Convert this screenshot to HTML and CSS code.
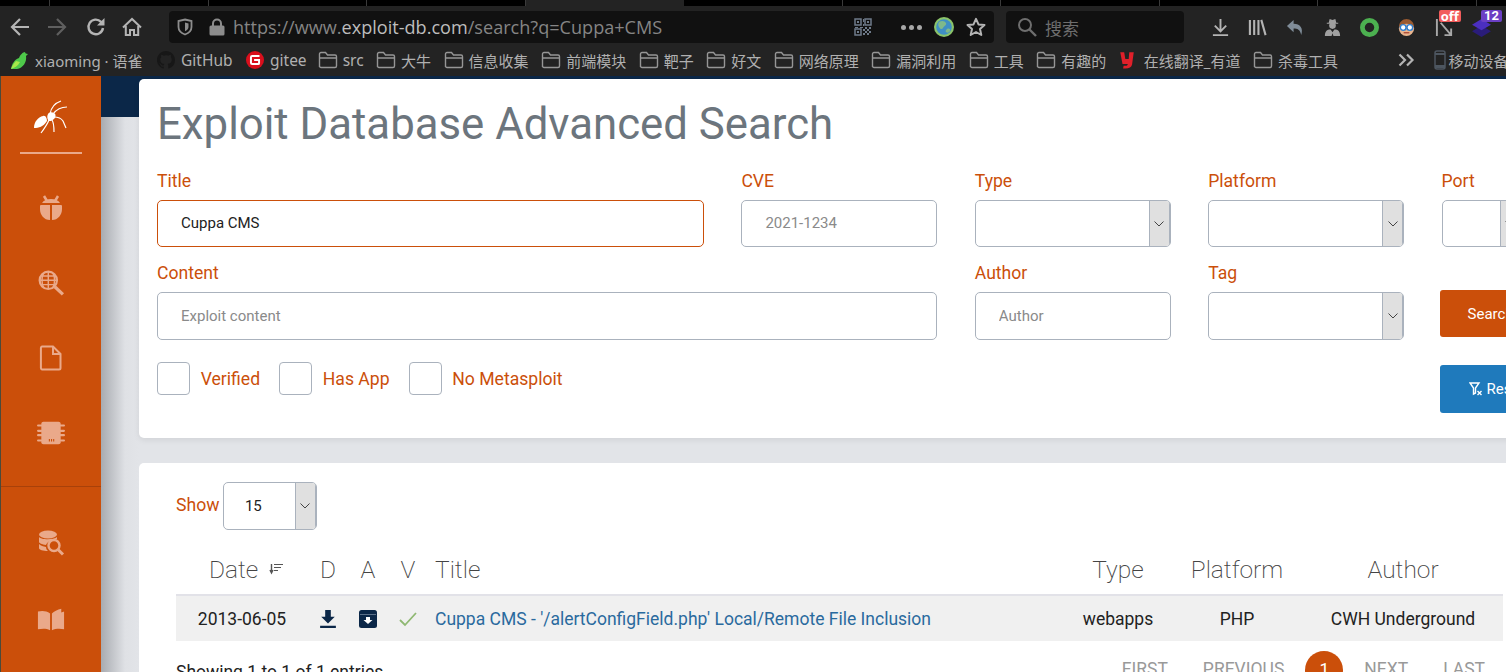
FILE: index.html
```html
<!DOCTYPE html>
<html lang="en">
<head>
    <meta charset="UTF-8">
    <meta name="viewport" content="width=device-width, initial-scale=1.0">
    <title>Exploit Database Advanced Search</title>
    <link rel="stylesheet" href="styles.css">
</head>
<body>
    <svg class="sprites" width="0" height="0">
        <symbol id="folder" viewBox="0 0 20 18"><path d="M1.500 16V3a1.500 1.500 0 0 1 1.500-1.500h4.500L9.500 4H17a1.500 1.500 0 0 1 1.500 1.500V15a1.500 1.500 0 0 1-1.500 1.500H3A1.500 1.500 0 0 1 1.500 15zM1.500 7h17" fill="none" stroke="#969696" stroke-width="1.400"/></symbol>
        <symbol id="chevron" viewBox="0 0 12 8"><path d="M1.500 1.500 6 6l4.500-4.500" fill="none" stroke="#444" stroke-width="1"/></symbol>
    </svg>

    <div class="tabstrip">
        <span class="tab-start"></span>
        <span class="tab"></span><span class="tab"></span><span class="tab"></span>
        <span class="tab active"></span>
        <span class="tab"></span><span class="tab"></span><span class="tab"></span><span class="tab"></span><span class="tab"></span>
    </div>

    <div class="toolbar">
        <svg class="nav-icon" viewBox="0 0 20 20"><path d="M19 10H2M10 2l-8 8 8 8" fill="none" stroke="#b4b4b4" stroke-width="2.200"/></svg>
        <svg class="nav-icon forward" viewBox="0 0 20 20"><path d="M1 10h17M10 2l8 8-8 8" fill="none" stroke="#5f5f5f" stroke-width="2.200"/></svg>
        <svg class="nav-icon reload" viewBox="0 0 20 20"><path d="M17 11a7.300 7.300 0 1 1-2-6.200L17 7" fill="none" stroke="#b4b4b4" stroke-width="2.400"/><path d="M18.500 1v7.500H11z" fill="#b4b4b4"/></svg>
        <svg class="nav-icon home" viewBox="0 0 20 20"><path d="M1 10.500 10 2l9 8.500M3.800 9v9h4.200v-5h4v5h4.200V9" fill="none" stroke="#b4b4b4" stroke-width="2"/></svg>

        <div class="urlbar">
            <svg class="shield" viewBox="0 0 16 18"><path d="M8 1.500 14.500 3v6c0 3.500-2.500 6-6.500 7.500C4 15 1.500 12.500 1.500 9V3z" fill="none" stroke="#8c8c8c" stroke-width="1.800"/><path d="M8 4.500 11.500 5.500v3.500c0 2-1.500 3.300-3.500 4.200z" fill="#8c8c8c"/></svg>
            <svg class="lock" viewBox="0 0 16 18"><path d="M4 8V5.500a4 4 0 0 1 8 0V8" fill="none" stroke="#8c8c8c" stroke-width="2"/><rect x="0.500" y="7.500" width="15" height="10" rx="1.500" fill="#8c8c8c"/></svg>
            <span class="url">https://www.<b>exploit-db.com</b>/search?q=Cuppa+CMS</span>
            <svg class="qr" viewBox="0 0 18 18"><path d="M1 1h6v6H1zM11 1h6v6h-6zM1 11h6v6H1z" fill="none" stroke="#6f7b8a" stroke-width="1.500"/><path d="M3 3h2v2H3zM13 3h2v2h-2zM3 13h2v2H3zM9 1h1v3H9zM9 6h1v2H9zM1 9h3v1H1zM6 9h3v1H6zM11 9h2v2h-2zM15 9h2v2h-2zM9 11h2v2H9zM13 11h2v2h-2zM11 13h2v2h-2zM15 13h2v2h-2zM9 15h2v2H9zM13 15h2v2h-2z" fill="#6f7b8a"/></svg>
            <span class="dots"><i></i><i></i><i></i></span>
            <svg class="globe" viewBox="0 0 20 20"><circle cx="10" cy="10" r="10" fill="#8bc46a"/><circle cx="10" cy="10" r="7.800" fill="#3f8fc4"/><path d="M5 5c3-2 6-1 7 1s-2 3-3 5-3 1-4-1-1-3 0-5zM13 12c2-1 4 0 3 2s-3 2-4 1 0-2 1-3z" fill="#7fb98a"/></svg>
            <svg class="star" viewBox="0 0 20 20"><path d="M10 1.800 12.500 7.400l6 .6-4.500 4 1.300 6L10 15l-5.300 3 1.300-6L1.500 8l6-.6z" fill="none" stroke="#b4b4b4" stroke-width="2" stroke-linejoin="round"/></svg>
        </div>

        <div class="searchbar">
            <svg class="search-glass" viewBox="0 0 20 20"><circle cx="8" cy="8" r="6" fill="none" stroke="#6e6e6e" stroke-width="2"/><path d="m12.500 12.500 6.500 6.500" stroke="#6e6e6e" stroke-width="2.400"/></svg>
            <span>搜索</span>
        </div>

        <div class="addons">
            <svg class="addon" viewBox="0 0 20 20"><path d="M10 1v12M4 8l6 6 6-6M2 18h16" fill="none" stroke="#b4b4b4" stroke-width="2"/></svg>
            <svg class="addon" viewBox="0 0 20 20"><path d="M2 2v16M6.500 2v16M11 2v16M14 2l4.500 16" fill="none" stroke="#b4b4b4" stroke-width="2.200"/></svg>
            <svg class="addon" viewBox="0 0 20 20"><path d="M8 2 1 8.500 8 15v-4c4 0 7 1 8 7 2.500-7-1-12-8-12z" fill="#7f8c98"/></svg>
            <svg class="addon" viewBox="0 0 20 20"><path d="M7 1l3 1 3-1 1 4h2v1H4V5h2z" fill="#a0a0a0"/><circle cx="10" cy="8" r="3.500" fill="#a0a0a0"/><path d="M2 19c0-5 2-7 6-7l2 3 2-3c4 0 6 2 6 7h-7l-1-3-1 3z" fill="#a0a0a0"/></svg>
            <svg class="addon" viewBox="0 0 20 20"><circle cx="10" cy="10" r="7.500" fill="none" stroke="#4cb050" stroke-width="5"/></svg>
            <svg class="addon" viewBox="0 0 20 20"><circle cx="10" cy="11" r="8" fill="#e8b48e"/><path d="M2 10c0-6 4-9 8-9s8 3 8 9c-2-3-4-4-8-4s-6 1-8 4z" fill="#9a5a30"/><circle cx="6.500" cy="10" r="3" fill="#fff" stroke="#2f7fd0" stroke-width="1.500"/><circle cx="13.500" cy="10" r="3" fill="#fff" stroke="#2f7fd0" stroke-width="1.500"/><path d="M7 15.500h6" stroke="#b0503a" stroke-width="1.500"/></svg>
            <span class="badged">
                <svg class="addon" viewBox="0 0 20 20"><path d="M2 1v18M6 5l11 13M17 11v7h-7" fill="none" stroke="#a8a8a8" stroke-width="2"/></svg>
                <span class="badge off">off</span>
            </span>
            <span class="badged">
                <svg class="addon" viewBox="0 0 20 20"><path d="M10 8l10 6-10 6-10-6z" fill="#2a1c7a"/><path d="M10 1l10 6-10 6L0 7z" fill="#4b2fc0"/></svg>
                <span class="badge count">12</span>
            </span>
        </div>
    </div>

    <div class="bookmarks">
        <span class="mark first">
            <svg class="mark-icon yuque" viewBox="0 0 20 20"><path d="M1 19c1-5 3-9 8-11 1-3 4-6 6-6 0 1 1 2 3 2l-2 2c1 6-3 12-9 13z" fill="#4ec94a"/><path d="M1 19c3-1 7-3 9-7l-4-1c-2 2-4 5-5 8z" fill="#a8e84a"/></svg>
            xiaoming · 语雀
        </span>
        <span class="mark latin">
            <svg class="mark-icon gh" viewBox="0 0 16 16"><path fill="#171717" d="M8 0C3.580 0 0 3.580 0 8c0 3.540 2.290 6.530 5.470 7.590.4.070.55-.17.55-.38v-1.340c-2.230.48-2.700-1.070-2.700-1.070-.36-.93-.89-1.170-.89-1.170-.73-.5.050-.49.050-.49.800.060 1.230.830 1.230.830.710 1.220 1.870.870 2.330.660.070-.520.280-.870.510-1.070-1.780-.2-3.640-.890-3.640-3.950 0-.870.310-1.590.820-2.150-.08-.2-.36-1.020.08-2.120 0 0 .67-.210 2.200.820A7.650 7.650 0 0 1 8 3.870c.68 0 1.360.09 2 .27 1.530-1.040 2.200-.82 2.200-.82.440 1.100.16 1.920.080 2.120.510.560.820 1.270.820 2.150 0 3.070-1.870 3.750-3.650 3.950.290.250.540.730.540 1.480v2.190c0 .210.150.460.550.380A8.010 8.010 0 0 0 16 8c0-4.420-3.580-8-8-8z"/></svg>
            GitHub
        </span>
        <span class="mark latin tight">
            <svg class="mark-icon" viewBox="0 0 20 20"><circle cx="10" cy="10" r="10" fill="#d90f1c"/><path d="M15 5.500H7a1.500 1.500 0 0 0-1.500 1.500v6A1.500 1.500 0 0 0 7 14.500h6.500a1 1 0 0 0 1-1V10H9" fill="none" stroke="#fff" stroke-width="2.200"/></svg>
            gitee
        </span>
        <span class="mark latin"><svg class="mark-icon"><use href="#folder"/></svg>src</span>
        <span class="mark"><svg class="mark-icon"><use href="#folder"/></svg>大牛</span>
        <span class="mark"><svg class="mark-icon"><use href="#folder"/></svg>信息收集</span>
        <span class="mark"><svg class="mark-icon"><use href="#folder"/></svg>前端模块</span>
        <span class="mark"><svg class="mark-icon"><use href="#folder"/></svg>靶子</span>
        <span class="mark"><svg class="mark-icon"><use href="#folder"/></svg>好文</span>
        <span class="mark"><svg class="mark-icon"><use href="#folder"/></svg>网络原理</span>
        <span class="mark"><svg class="mark-icon"><use href="#folder"/></svg>漏洞利用</span>
        <span class="mark"><svg class="mark-icon"><use href="#folder"/></svg>工具</span>
        <span class="mark"><svg class="mark-icon"><use href="#folder"/></svg>有趣的</span>
        <span class="mark">
            <svg class="mark-icon youdao" viewBox="0 0 14 16"><path d="M1 1h3.500l1 6h3l.5-6h4L11.500 12C11 15 8 16 3.500 15.500l.5-2.500c2.500.3 3.500 0 3.700-1.500H3z" fill="#e0202a"/></svg>
            在线翻译_有道
        </span>
        <span class="mark"><svg class="mark-icon"><use href="#folder"/></svg>杀毒工具</span>
        <svg class="more" viewBox="0 0 17 14"><path d="M1.500 1.500 7 7l-5.500 5.500M9 1.500 14.500 7 9 12.500" fill="none" stroke="#b4b4b4" stroke-width="2.200"/></svg>
        <svg class="phone" viewBox="0 0 12 20"><rect x="1" y="1" width="10" height="18" rx="2" fill="none" stroke="#4d5660" stroke-width="1.500"/><path d="M1 3h10v2H1zM1 15h10v3H1z" fill="#4d5660"/></svg>
        <span class="mark-text">移动设备</span>
    </div>

    <div class="page">
        <nav class="sidebar">
            <div class="brand">
                <svg class="spider" viewBox="0 0 36 34">
                    <path d="M1 28C1 22 5 17 10 16c3-1 4 3 4 5-4 6-8 7-13 7z" fill="#fff"/>
                    <path d="M15 14c1-2 4-2 6-1s2 4 0 6-5 3-6 1-1-4 0-6z" fill="#fff"/>
                    <path d="M17 14C18 8 22 3 28 1M20 14C23 10 28 7 34 7M21 17c4 0 7 1 9 4l3 7M19 20c2 3 2 7 2 12M16 20c-2 5-5 9-8 13" fill="none" stroke="#fff" stroke-width="1.200"/>
                </svg>
            </div>
            <div class="side-items">
                <svg class="side-icon" viewBox="0 0 24 26"><path d="M5 1l3 5M19 1l-3 5" stroke="#eaa98a" stroke-width="2.500"/><path d="M3 8c2-3 5-4 9-4s7 1 9 4z" fill="#eaa98a"/><path d="M1 11a1 1 0 0 1 1-1h9v15C5 25 1 20 1 14zM23 11a1 1 0 0 0-1-1h-9v15c6 0 10-5 10-11z" fill="#eaa98a"/></svg>
                <svg class="side-icon" viewBox="0 0 24 24"><circle cx="9.500" cy="9.500" r="8" fill="none" stroke="#eaa98a" stroke-width="2"/><path d="M2 9.500h15M9.500 1.500v16M5 3c-2 5-2 8 0 13M14 3c2 5 2 8 0 13M3 5.500h13M3 13.500h13" fill="none" stroke="#eaa98a" stroke-width="1.300"/><path d="m15.500 15.500 7.500 7" stroke="#eaa98a" stroke-width="3"/></svg>
                <svg class="side-icon" viewBox="0 0 22 26"><path d="M2 1.500h11l7.500 7.500v14a1.500 1.500 0 0 1-1.500 1.500H2A1.500 1.500 0 0 1 .9 23V3A1.500 1.500 0 0 1 2 1.500z" fill="none" stroke="#eaa98a" stroke-width="2"/><path d="M13 1.500V9h7.500" fill="none" stroke="#eaa98a" stroke-width="2"/></svg>
                <svg class="side-icon" viewBox="0 0 26 22"><rect x="4" y="0.500" width="18" height="21" rx="2" fill="#eaa98a"/><path d="M1 4h3M1 9h3M1 13h3M1 18h3M22 4h3M22 9h3M22 13h3M22 18h3" stroke="#eaa98a" stroke-width="2" stroke-linecap="round"/><path d="M11.500 16.500v2.500M13.500 16.500v2.500M15.500 16.500v2.500" stroke="#cb4f0a" stroke-width="1"/></svg>
            </div>
            <div class="side-items lower">
                <svg class="side-icon" viewBox="0 0 26 26"><ellipse cx="10" cy="4.500" rx="9" ry="4" fill="#eaa98a"/><path d="M1 7c2 3 15 3 18 0v2c-6 1-10 3-11 6-4-.5-7-2-7-3zM1 14c2 2 4 2.500 7 3 0 2 1 3 2 4-5 0-9-1-9-3z" fill="#eaa98a"/><circle cx="16" cy="15.500" r="5.500" fill="none" stroke="#eaa98a" stroke-width="2.400"/><path d="m20 19.500 5 5" stroke="#eaa98a" stroke-width="3"/></svg>
                <svg class="side-icon" viewBox="0 0 30 26"><path d="M14 6C10 3 5 3 1 4v19c5-1 9-1 13 1zM16 6c2-2 6-4 10-5v4l3-1v19c-4-1-9-1-13 1z" fill="#eaa98a"/></svg>
            </div>
        </nav>

        <main class="content">
            <section class="card search-card">
                <h1>Exploit Database Advanced Search</h1>
                <form class="search-form">
                    <div class="field f-title">
                        <label>Title</label>
                        <input class="text-input focused" type="text" value="Cuppa CMS">
                    </div>
                    <div class="field">
                        <label>CVE</label>
                        <input class="text-input" type="text" placeholder="2021-1234">
                    </div>
                    <div class="field">
                        <label>Type</label>
                        <div class="select"><span class="select-value"></span><span class="select-arrow"><svg class="chevron"><use href="#chevron"/></svg></span></div>
                    </div>
                    <div class="field">
                        <label>Platform</label>
                        <div class="select"><span class="select-value"></span><span class="select-arrow"><svg class="chevron"><use href="#chevron"/></svg></span></div>
                    </div>
                    <div class="field">
                        <label>Port</label>
                        <div class="select port"><span class="select-value"></span><span class="select-arrow"><svg class="chevron"><use href="#chevron"/></svg></span></div>
                    </div>

                    <div class="field f-content">
                        <label>Content</label>
                        <input class="text-input tall" type="text" placeholder="Exploit content">
                    </div>
                    <div class="field">
                        <label>Author</label>
                        <input class="text-input tall" type="text" placeholder="Author">
                    </div>
                    <div class="field">
                        <label>Tag</label>
                        <div class="select tall"><span class="select-value"></span><span class="select-arrow"><svg class="chevron"><use href="#chevron"/></svg></span></div>
                    </div>
                    <div class="f-submit">
                        <button class="btn btn-search" type="button">Search</button>
                    </div>

                    <div class="checks">
                        <span class="check"><span class="box"></span>Verified</span>
                        <span class="check"><span class="box"></span>Has App</span>
                        <span class="check"><span class="box"></span>No Metasploit</span>
                    </div>
                    <div class="f-reset">
                        <button class="btn btn-reset" type="button">
                            <svg class="funnel" viewBox="0 0 14 14"><path d="M1 1h9L6.500 6v5L4.500 12V6z" fill="none" stroke="#fff" stroke-width="1.400"/><path d="m8.500 9 4 4M12.500 9l-4 4" stroke="#fff" stroke-width="1.400"/></svg>
                            Reset
                        </button>
                    </div>
                </form>
            </section>

            <section class="card results-card">
                <div class="length">
                    <span>Show</span>
                    <div class="select length-select"><span class="select-value">15</span><span class="select-arrow"><svg class="chevron"><use href="#chevron"/></svg></span></div>
                </div>
                <table class="results">
                    <thead>
                        <tr>
                            <th class="c-date">Date <svg class="sort" viewBox="0 0 14 12"><path d="M2.500 1v8M1 7l1.500 3L4 7" fill="none" stroke="#555" stroke-width="1.400"/><path d="M5 1.500h9M5 4.500h7M5 7.500h4" stroke="#555" stroke-width="1.200"/></svg></th>
                            <th class="c-icon">D</th>
                            <th class="c-icon">A</th>
                            <th class="c-icon">V</th>
                            <th class="c-title">Title</th>
                            <th class="c-type">Type</th>
                            <th class="c-platform">Platform</th>
                            <th class="c-author">Author</th>
                        </tr>
                    </thead>
                    <tbody>
                        <tr>
                            <td>2013-06-05</td>
                            <td><svg class="row-icon" viewBox="0 0 14 16"><path d="M4.500 0h5v6H13L7 12 1 6h3.500zM0 14h14v2H0z" fill="#0b2748"/></svg></td>
                            <td><svg class="row-icon" viewBox="0 0 18 18"><rect y="0" width="18" height="18" rx="2.500" fill="#0b2748"/><path d="M1 4.500h16" stroke="#5a6f88" stroke-width="1"/><path d="M7 7h4v3h2.500L9 14 4.500 10H7z" fill="#fff"/></svg></td>
                            <td><svg class="row-icon" viewBox="0 0 18 14"><path d="M1 8l5 5L17 1" fill="none" stroke="#8fb872" stroke-width="1.800"/></svg></td>
                            <td class="c-title"><a href="#">Cuppa CMS - '/alertConfigField.php' Local/Remote File Inclusion</a></td>
                            <td>webapps</td>
                            <td>PHP</td>
                            <td>CWH Underground</td>
                        </tr>
                    </tbody>
                </table>
                <div class="table-foot">
                    <span class="info">Showing 1 to 1 of 1 entries</span>
                    <div class="pager">
                        <span class="pg wide-right">FIRST</span>
                        <span class="pg">PREVIOUS</span>
                        <span class="pg-current">1</span>
                        <span class="pg wide-right">NEXT</span>
                        <span class="pg">LAST</span>
                    </div>
                </div>
            </section>
        </main>
    </div>
</body>
</html>
```

FILE: styles.css
```css
html, body {
    margin: 0;
    padding: 0;
    height: 672px;
    overflow: hidden;
}
body {
    font-family: Roboto, "Noto Sans CJK SC", sans-serif;
    background-color: #e2e4e8;
}
.sprites {
    display: block;
    height: 0;
}

/* browser chrome */
.tabstrip {
    display: flex;
    height: 6px;
    background-color: #000;
}
.tab-start {
    flex: 0 0 50px;
    border-right: 1px solid #3a3a3a;
    box-sizing: border-box;
}
.tab {
    flex: 0 0 158.5px;
    box-sizing: border-box;
    border-right: 1px solid #3a3a3a;
}
.tab.active {
    background-color: #232323;
    border-right: 0;
}
.toolbar {
    display: flex;
    align-items: center;
    height: 42px;
    padding-left: 10px;
    background-color: #232323;
    color: #b4b4b4;
}
.nav-icon {
    flex: none;
    width: 20px;
    height: 20px;
    margin-right: 17px;
}
.nav-icon.forward {
    margin-right: 19px;
}
.nav-icon.reload {
    margin-right: 16px;
}
.nav-icon.home {
    margin-right: 27px;
}
.urlbar {
    display: flex;
    align-items: center;
    flex: none;
    width: 825px;
    height: 32px;
    box-sizing: border-box;
    padding-left: 8px;
    background-color: #111;
    border-radius: 4px;
    font-family: "Open Sans", sans-serif;
    font-size: 18.1px;
}
.shield {
    width: 16px;
    height: 18px;
    margin-right: 16px;
}
.lock {
    width: 16px;
    height: 18px;
    margin-right: 8px;
}
.url {
    width: 621px;
    color: #858585;
    white-space: nowrap;
}
.url b {
    font-weight: 400;
    color: #bdbdbd;
}
.qr {
    width: 18px;
    height: 18px;
    margin-right: 29px;
}
.dots {
    display: flex;
    gap: 3px;
    width: 33px;
}
.dots i {
    width: 5px;
    height: 5px;
    border-radius: 50%;
    background-color: #a8a8a8;
}
.globe {
    width: 20px;
    height: 20px;
    margin-right: 12px;
}
.star {
    width: 20px;
    height: 20px;
}
.searchbar {
    display: flex;
    align-items: center;
    flex: none;
    width: 178px;
    height: 32px;
    box-sizing: border-box;
    margin-left: 12px;
    padding-left: 11px;
    background-color: #111;
    border-radius: 4px;
    color: #6e6e6e;
    font-size: 17px;
}
.search-glass {
    width: 20px;
    height: 20px;
    margin-right: 8px;
}
.addons {
    display: flex;
    align-items: center;
    gap: 18.3px;
    margin-left: 27px;
}
.addon {
    display: block;
    width: 19px;
    height: 19px;
}
.badged {
    position: relative;
    display: block;
}
.badge {
    position: absolute;
    top: -8px;
    height: 12px;
    font-family: "Open Sans", sans-serif;
    font-size: 13px;
    font-weight: 700;
    line-height: 12px;
    color: #fff;
    border-radius: 2px;
    padding: 0 2px;
    white-space: nowrap;
}
.badge.off {
    left: 4px;
    background-color: #f25c5c;
}
.badge.count {
    left: 9px;
    background-color: #6b3fc4;
    font-family: Roboto, sans-serif;
    padding: 0 3px;
}
.bookmarks {
    display: flex;
    align-items: center;
    gap: 12.5px;
    height: 28px;
    padding: 0 0 4px 10px;
    box-sizing: border-box;
    background-color: #232323;
    font-family: "Noto Sans", "Noto Sans CJK SC", sans-serif;
    font-size: 15px;
    color: #b0b0b0;
    white-space: nowrap;
}
.mark {
    display: flex;
    align-items: center;
    gap: 5px;
}
.mark.latin {
    font-size: 15.5px;
}
.mark.first {
    margin-right: 2px;
}
.mark.tight {
    margin-right: -1.5px;
}
.mark-icon {
    flex: none;
    width: 20px;
    height: 18px;
}
.mark-icon.yuque {
    height: 20px;
}
.mark-icon.gh {
    width: 18px;
    margin-right: 1px;
}
.mark-icon.youdao {
    width: 16px;
    margin-right: 4px;
}
.more {
    flex: none;
    width: 17px;
    height: 14px;
    margin-left: 48px;
}
.phone {
    flex: none;
    width: 12px;
    height: 20px;
    margin-left: 6px;
}
.mark-text {
    margin-left: -10px;
}

/* page */
.page {
    display: flex;
    height: 596px;
}
.sidebar {
    flex: 0 0 100px;
    border-left: 1px solid #4a4a3a;
    background-color: #cb4f0a;
}
.brand {
    display: flex;
    justify-content: center;
    align-items: flex-start;
    box-sizing: border-box;
    height: 78px;
    margin: 0 19px;
    padding-top: 24px;
    border-bottom: 2px solid #eaa98a;
}
.spider {
    width: 36px;
    height: 34px;
}
.side-items {
    display: flex;
    flex-direction: column;
    align-items: center;
    height: 333px;
    padding-top: 41px;
    box-sizing: border-box;
    gap: 49px;
    border-bottom: 1px solid #a8410a;
}
.side-items.lower {
    border-bottom: 0;
    height: auto;
    padding-top: 43px;
    gap: 51px;
}
.side-icon {
    width: 28px;
    height: 26px;
}
.content {
    flex: 1;
    min-width: 0;
    padding: 3px 0 0 38px;
    overflow: hidden;
    background:
        linear-gradient(#0b2748, #0b2748) 0 0 / 100% 41px no-repeat,
        linear-gradient(90deg, #a8abb0, #dfe1e5 24px, #e2e4e8 38px);
}
.card {
    width: 1500px;
    background-color: #fff;
    border-radius: 5px;
}
.search-card {
    height: 359px;
    box-sizing: border-box;
    padding: 14px 0 0 18px;
    box-shadow: 0 2px 6px rgba(0, 0, 0, 0.08);
}
h1 {
    margin: 0;
    font-size: 43.75px;
    font-weight: 400;
    line-height: 62px;
    color: #6c757d;
}
.search-form {
    display: grid;
    grid-template-columns: 547px 196px 196px 196px 196px;
    grid-template-rows: 92px 92px auto;
    column-gap: 37.4px;
    margin-top: 14px;
}
.field {
    display: flex;
    flex-direction: column;
}
.f-content {
    grid-column: 1 / span 2;
}
.f-submit {
    margin: 29px 0 0 -2px;
}
label {
    font-size: 17.6px;
    line-height: 24px;
    margin-bottom: 7px;
    color: #cb4f0a;
}
.text-input {
    box-sizing: border-box;
    width: 100%;
    height: 47px;
    padding: 0 23px 2px;
    border: 1px solid #aab2bd;
    border-radius: 5px;
    font-family: Roboto, sans-serif;
    font-size: 15px;
    color: #222;
    outline: none;
}
.text-input.tall {
    height: 48px;
    padding-bottom: 0;
}
.text-input::placeholder {
    color: #8a8a8a;
}
.text-input.focused {
    border-color: #cb4f0a;
}
.select {
    display: flex;
    box-sizing: border-box;
    height: 47px;
    border: 1px solid #aab2bd;
    border-radius: 5px;
    background-color: #fff;
    overflow: hidden;
}
.select.tall {
    height: 48px;
}
.select.port {
    width: 80px;
}
.select-value {
    flex: 1;
    align-self: center;
}
.select-arrow {
    display: flex;
    align-items: center;
    justify-content: center;
    flex: 0 0 19px;
    background-color: #e0e0e0;
    border-left: 1px solid #aab2bd;
    border-right: 1px solid #aab2bd;
}
.chevron {
    width: 12px;
    height: 8px;
}
.checks {
    grid-column: 1 / span 4;
    display: flex;
    gap: 19px;
    margin-top: 9px;
}
.check {
    display: flex;
    align-items: center;
    gap: 10.7px;
    height: 33px;
    font-size: 17.6px;
    color: #cb4f0a;
}
.box {
    width: 33px;
    height: 33px;
    box-sizing: border-box;
    border: 1px solid #aab2bd;
    border-radius: 4px;
}
.f-reset {
    grid-row: 3;
    grid-column: 5;
    margin: 12px 0 0 -2px;
}
.btn {
    display: flex;
    align-items: center;
    width: 190px;
    border: 0;
    border-radius: 3px;
    padding: 0 0 0 28px;
    font-family: Roboto, sans-serif;
    font-size: 15px;
    color: #fff;
}
.btn-search {
    height: 47px;
    background-color: #cb4f0a;
}
.btn-reset {
    height: 48px;
    padding-left: 29px;
    background-color: #1f7abc;
}
.funnel {
    width: 14px;
    height: 14px;
    margin-right: 4px;
}

/* results */
.results-card {
    height: 300px;
    margin-top: 25px;
    box-sizing: border-box;
    padding: 19px 0 0 37px;
}
.length {
    display: flex;
    align-items: center;
    gap: 3.5px;
    font-size: 17.6px;
    line-height: 20px;
    color: #cb4f0a;
}
.length > span {
    padding-bottom: 2px;
}
.length-select {
    width: 94px;
    height: 48px;
    color: #222;
    font-size: 15px;
}
.length-select .select-value {
    padding-left: 21px;
}
.results {
    table-layout: fixed;
    border-collapse: collapse;
    width: 1327px;
    margin-top: 17px;
}
.results th {
    box-sizing: border-box;
    height: 48px;
    padding: 0 0 2px;
    font-size: 24.5px;
    font-weight: 200;
    color: #444;
    border-bottom: 2px solid #e2e2e8;
}
.c-date { width: 132px; }
.c-icon { width: 40px; }
.c-type { width: 106px; }
.c-platform { width: 132px; }
.c-author { width: 200px; }
.results th.c-date {
    padding-left: 8px;
}
.results th.c-title, .results td.c-title {
    text-align: left;
    padding-left: 7px;
}
.sort {
    width: 14px;
    height: 12px;
    margin-left: 5px;
    vertical-align: 3px;
}
.results td {
    height: 46px;
    padding: 0;
    box-sizing: border-box;
    background-color: #f0f0f0;
    text-align: center;
    font-size: 17.5px;
    color: #222;
}
.results a {
    color: #2a6a9e;
    text-decoration: none;
}
.row-icon {
    display: block;
    width: 18px;
    height: 18px;
    margin: 0 auto;
}
.table-foot {
    display: flex;
    justify-content: space-between;
    align-items: flex-start;
    box-sizing: border-box;
    width: 1327px;
    padding-right: 18px;
    margin-top: 10px;
}
.info {
    font-size: 17.5px;
    margin-top: 11px;
    color: #222;
}
.pager {
    display: flex;
    align-items: flex-start;
    gap: 21px;
    font-size: 17.5px;
    color: #999;
}
.pg {
    margin-top: 8px;
}
.pg.wide-right {
    margin-right: 14px;
}
.pg-current {
    width: 38px;
    height: 38px;
    line-height: 38px;
    text-align: center;
    border-radius: 50%;
    background-color: #cb4f0a;
    color: #fff;
}
```
